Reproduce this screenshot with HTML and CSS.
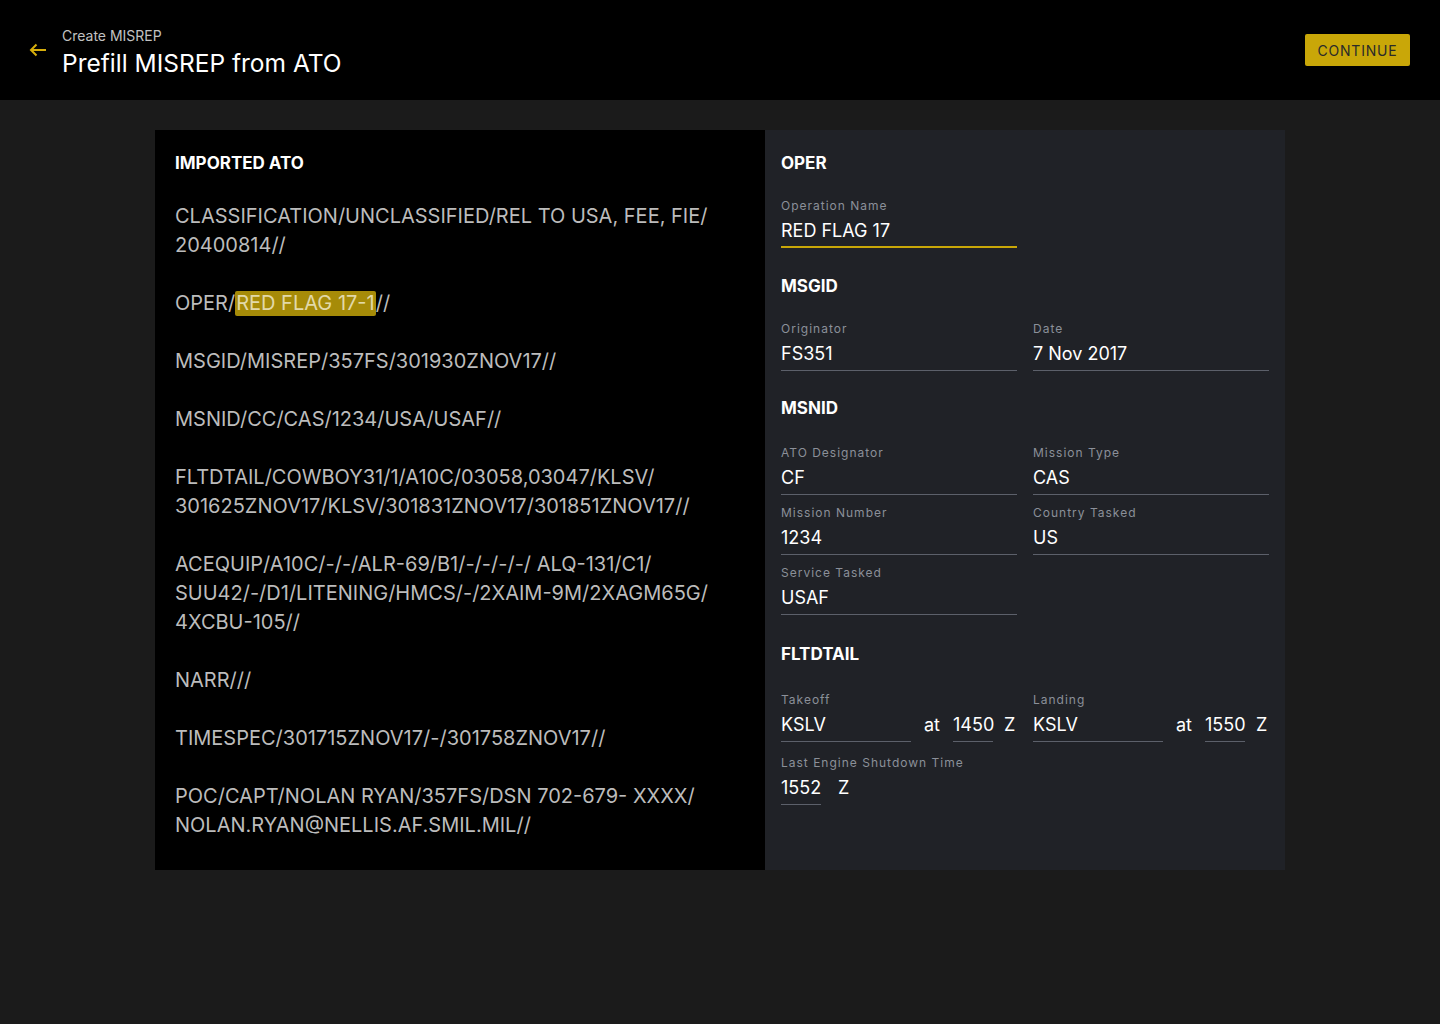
FILE: index.html
```html
<!DOCTYPE html>
<html lang="en">
<head>
<meta charset="utf-8">
<title>Prefill MISREP from ATO</title>
<link rel="stylesheet" href="styles.css">
</head>
<body>
<header class="topbar">
  <div class="topbar-left">
    <button class="back" aria-label="Back">
      <svg width="18" height="14" viewBox="0 0 18 14" fill="none"><path d="M17 7H2M7.5 1.5L2 7l5.5 5.5" stroke="#d6ae0c" stroke-width="2"/></svg>
    </button>
    <div class="titles">
      <div class="subtitle">Create MISREP</div>
      <h1 class="title">Prefill MISREP from ATO</h1>
    </div>
  </div>
  <button class="continue">CONTINUE</button>
</header>
<main class="main">
  <div class="panel">
    <section class="ato">
      <h2 class="heading">IMPORTED ATO</h2>
      <p>CLASSIFICATION/UNCLASSIFIED/REL TO USA, FEE, FIE/<br>20400814//</p>
      <p>OPER/<mark class="hl">RED FLAG 17-1</mark>//</p>
      <p>MSGID/MISREP/357FS/301930ZNOV17//</p>
      <p>MSNID/CC/CAS/1234/USA/USAF//</p>
      <p>FLTDTAIL/COWBOY31/1/A10C/03058,03047/KLSV/<br>301625ZNOV17/KLSV/301831ZNOV17/301851ZNOV17//</p>
      <p>ACEQUIP/A10C/-/-/ALR-69/B1/-/-/-/-/ ALQ-131/C1/<br>SUU42/-/D1/LITENING/HMCS/-/2XAIM-9M/2XAGM65G/<br>4XCBU-105//</p>
      <p>NARR///</p>
      <p>TIMESPEC/301715ZNOV17/-/301758ZNOV17//</p>
      <p>POC/CAPT/NOLAN RYAN/357FS/DSN 702-679- XXXX/<br>NOLAN.RYAN@NELLIS.AF.SMIL.MIL//</p>
    </section>
    <section class="form">
      <div class="group">
        <h2 class="heading">OPER</h2>
        <div class="grid">
          <div class="field active">
            <div class="label">Operation Name</div>
            <div class="value">RED FLAG 17</div>
          </div>
        </div>
      </div>
      <div class="group msg">
        <h2 class="heading">MSGID</h2>
        <div class="grid">
          <div class="field"><div class="label">Originator</div><div class="value">FS351</div></div>
          <div class="field"><div class="label">Date</div><div class="value">7 Nov 2017</div></div>
        </div>
      </div>
      <div class="group msn">
        <h2 class="heading">MSNID</h2>
        <div class="grid">
          <div class="field"><div class="label">ATO Designator</div><div class="value">CF</div></div>
          <div class="field"><div class="label">Mission Type</div><div class="value">CAS</div></div>
          <div class="field"><div class="label">Mission Number</div><div class="value">1234</div></div>
          <div class="field"><div class="label">Country Tasked</div><div class="value">US</div></div>
          <div class="field"><div class="label">Service Tasked</div><div class="value">USAF</div></div>
        </div>
      </div>
      <div class="group flt">
        <h2 class="heading">FLTDTAIL</h2>
        <div class="grid">
          <div class="combo">
            <div class="label">Takeoff</div>
            <div class="combo-row">
              <div class="value wide">KSLV</div>
              <span class="word at">at</span>
              <div class="value short">1450</div>
              <span class="word">Z</span>
            </div>
          </div>
          <div class="combo">
            <div class="label">Landing</div>
            <div class="combo-row">
              <div class="value wide">KSLV</div>
              <span class="word at">at</span>
              <div class="value short">1550</div>
              <span class="word">Z</span>
            </div>
          </div>
          <div class="combo last">
            <div class="label">Last Engine Shutdown Time</div>
            <div class="combo-row">
              <div class="value short">1552</div>
              <span class="word zed">Z</span>
            </div>
          </div>
        </div>
      </div>
    </section>
  </div>
</main>
</body>
</html>
```

FILE: styles.css
```css
* { box-sizing: border-box; }
html, body { margin: 0; padding: 0; }
body {
  background: #1b1b1b;
  font-family: Inter, "Noto Sans", "Liberation Sans", sans-serif;
  color: #fff;
  min-height: 1024px;
}
.topbar {
  height: 100px;
  background: #000;
  display: flex;
  align-items: center;
  justify-content: space-between;
  padding: 0 30px 0 29px;
}
.topbar-left { display: flex; align-items: center; }
.back {
  background: none;
  border: 0;
  padding: 0;
  width: 18px;
  height: 14px;
  margin: 0 15px 0 0;
  display: flex;
  cursor: pointer;
}
.titles { display: flex; flex-direction: column; padding-top: 4px; }
.subtitle {
  font-size: 14px;
  line-height: 18px;
  color: #c2c2c2;
}
.title {
  margin: 3px 0 0;
  font-size: 24.5px;
  line-height: 30px;
  font-weight: 400;
  color: #fff;
}
.continue {
  background: #c9a708;
  border: 0;
  border-radius: 2px;
  width: 105px;
  height: 32px;
  font-family: Inter, "Noto Sans", sans-serif;
  font-size: 14px;
  letter-spacing: 0.8px;
  color: #2a2a2a;
  font-weight: 400;
  padding: 0;
}
.main {
  padding: 30px 155px;
}
.panel {
  display: grid;
  grid-template-columns: 610px 520px;
  grid-template-rows: 740px;
}
.ato {
  background: #000;
  padding: 21px 20px 20px;
  overflow: hidden;
}
.heading {
  margin: 0;
  font-size: 17px;
  line-height: 24px;
  font-weight: 700;
  color: #fff;
}
.ato .heading { margin-bottom: 27px; }
.ato p {
  margin: 0 0 29px;
  font-size: 20px;
  line-height: 29px;
  color: #bcbcbc;
  font-weight: 400;
}
.ato p:last-child { margin-bottom: 0; }
.hl {
  background: #a68b08;
  color: #e2d9a8;
  border-radius: 2px;
  padding: 0 1px 1px 1px;
}
.form {
  background: #202227;
  padding: 21px 16px;
  overflow: hidden;
}
.group { margin-bottom: 26px; }
.group .heading { margin-bottom: 23px; }
.group.msg { margin-bottom: 25px; }
.group.msn .heading { margin-bottom: 25px; }
.group.flt { padding-top: 1px; }
.group.flt .heading { margin-bottom: 26px; }
.grid {
  display: grid;
  grid-template-columns: 236px 236px;
  column-gap: 16px;
  row-gap: 10px;
}
.label {
  font-size: 12px;
  line-height: 16px;
  letter-spacing: 1px;
  color: #8b9099;
}
.value {
  margin-top: 5px;
  font-size: 18px;
  line-height: 24px;
  color: #fff;
  padding-bottom: 4px;
  border-bottom: 1px solid #5c606a;
}
.field.active .value {
  border-bottom: 2px solid #c9a708;
  padding-bottom: 3px;
}
.combo-row {
  display: flex;
  align-items: flex-start;
}
.value.wide { width: 130px; }
.value.short { width: 40px; }
.word {
  margin-top: 5px;
  font-size: 18px;
  line-height: 24px;
  color: #fff;
  margin-left: 11px;
}
.word.at { margin-left: 13px; margin-right: 13px; }
.word.zed { margin-left: 17px; }
.combo.last { margin-top: 3px; }
```
